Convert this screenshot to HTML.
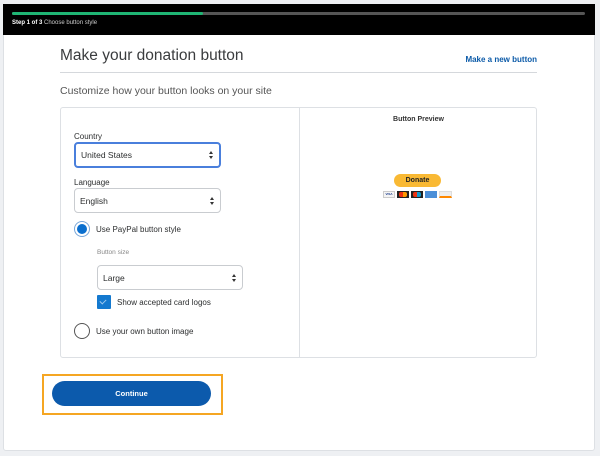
<!DOCTYPE html>
<html><head><style>
*{box-sizing:border-box;margin:0;padding:0}
body{width:600px;height:456px;background:#eef0f3;font-family:"Liberation Sans",sans-serif;position:relative;overflow:hidden;color:#2c2e2f}
.a{position:absolute}
.card{left:3px;top:4px;width:592px;height:447px;background:#fff;border:1px solid #dde0e4;border-radius:3px}
.hdr{left:3px;top:4px;width:592px;height:31px;background:#000}
.sel{background:#fff;border:1px solid #c9ccd0;border-radius:4px;font-size:8.5px;padding-left:5px;display:flex;align-items:center;color:#2c2e2f}
.sel:after{content:"";position:absolute;right:6px;top:50%;margin-top:-4px;border-left:2.5px solid transparent;border-right:2.5px solid transparent;border-bottom:3px solid #333;height:0}
.sel:before{content:"";position:absolute;right:6px;top:50%;margin-top:1px;border-left:2.5px solid transparent;border-right:2.5px solid transparent;border-top:3px solid #333;height:0}
.lbl{font-size:8px;color:#2c2e2f}
</style></head><body>
<div class="a card"></div>
<div class="a hdr"></div>
<div class="a" style="left:12px;top:12px;width:573px;height:3px;background:#555;border-radius:2px"></div>
<div class="a" style="left:12px;top:12px;width:191px;height:3px;background:#1fb574;border-radius:2px"></div>
<div class="a" style="left:12px;top:20px;font-size:6px;color:#fff"><b>Step 1 of 3</b> <span style="color:#ccc">Choose button style</span></div>
<div class="a" style="left:60px;top:47px;font-size:15.5px;color:#3a3c3e">Make your donation button</div>
<div class="a" style="right:63px;top:55px;font-size:8px;font-weight:bold;color:#0b5aa8">Make a new button</div>
<div class="a" style="left:60px;top:72px;width:477px;height:1px;background:#d5d8dc"></div>
<div class="a" style="left:60px;top:85px;font-size:10.5px;color:#555">Customize how your button looks on your site</div>
<div class="a" style="left:60px;top:107px;width:477px;height:251px;border:1px solid #dde0e4;border-radius:3px"></div>
<div class="a" style="left:299px;top:107px;width:1px;height:251px;background:#dde0e4"></div>
<div class="a lbl" style="left:74px;top:132px">Country</div>
<div class="a sel" style="left:74px;top:142px;width:147px;height:26px;border:2px solid #4a7fdc">United States</div>
<div class="a lbl" style="left:74px;top:178px">Language</div>
<div class="a sel" style="left:74px;top:188px;width:147px;height:25px">English</div>
<div class="a" style="left:74px;top:221px;width:16px;height:16px;border-radius:50%;border:1px solid #7aa7d9;background:#fff"></div>
<div class="a" style="left:77px;top:224px;width:10px;height:10px;border-radius:50%;background:#0b6fce"></div>
<div class="a lbl" style="left:96px;top:225px">Use PayPal button style</div>
<div class="a" style="left:97px;top:249px;font-size:6.5px;color:#888">Button size</div>
<div class="a sel" style="left:97px;top:265px;width:146px;height:25px">Large</div>
<div class="a" style="left:97px;top:295px;width:14px;height:14px;background:#1479cf;border-radius:1px"></div>
<div class="a" style="left:101px;top:298px;width:4px;height:6px;border-right:1px solid #9ec8ee;border-bottom:1px solid #9ec8ee;transform:rotate(45deg)"></div>
<div class="a lbl" style="left:117px;top:298px">Show accepted card logos</div>
<div class="a" style="left:74px;top:323px;width:16px;height:16px;border-radius:50%;border:1px solid #555;background:#fff"></div>
<div class="a lbl" style="left:96px;top:327px">Use your own button image</div>
<div class="a" style="left:300px;top:116px;width:237px;text-align:center;font-size:7px;font-weight:bold;color:#333">Button Preview</div>
<div class="a" style="left:394px;top:174px;width:47px;height:13px;background:#f9b934;border-radius:7px;font-size:7px;font-weight:bold;text-align:center;line-height:13px;color:#222">Donate</div>
<div class="a" style="left:383px;top:191px;width:12px;height:7px;background:#f4f4f4;border:1px solid #ccc;font-size:3px;color:#1a3a8a;text-align:center;line-height:5px;font-weight:bold">VISA</div>
<div class="a" style="left:397px;top:191px;width:12px;height:7px;background:#222"><div style="margin:1px 2px;width:8px;height:5px;background:linear-gradient(90deg,#e31 50%,#f90 50%);border-radius:2px"></div></div>
<div class="a" style="left:411px;top:191px;width:12px;height:7px;background:#222"><div style="margin:1px 2px;width:8px;height:5px;background:linear-gradient(90deg,#e31 50%,#19c 50%);border-radius:2px"></div></div>
<div class="a" style="left:425px;top:191px;width:12px;height:7px;background:#4b8fd8"></div>
<div class="a" style="left:439px;top:191px;width:13px;height:7px;background:#eee;border:1px solid #ddd;border-bottom:2px solid #f80"></div>
<div class="a" style="left:42px;top:374px;width:181px;height:41px;border:2px solid #f5a623"></div>
<div class="a" style="left:52px;top:381px;width:159px;height:25px;background:#0c5aac;border-radius:13px;color:#fff;font-size:7.5px;font-weight:bold;text-align:center;line-height:25px">Continue</div>
</body></html>
